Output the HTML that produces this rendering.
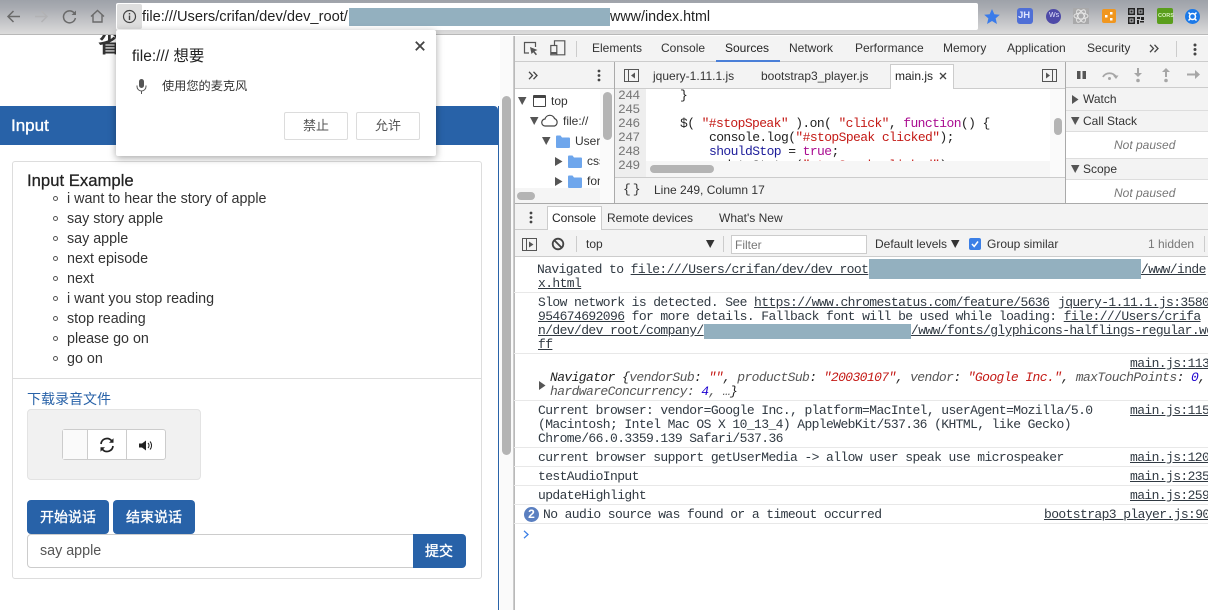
<!DOCTYPE html>
<html lang="zh"><head><meta charset="utf-8"><title>Input</title>
<style>
html,body{margin:0;padding:0}
body{width:1208px;height:610px;overflow:hidden;position:relative;background:#fff;font-family:"Liberation Sans","Noto Sans CJK SC",sans-serif;color:#222}
#w{position:absolute;left:0;top:0;width:1208px;height:610px;overflow:hidden;filter:blur(.3px)}
.b{position:absolute;box-sizing:border-box}
.t{position:absolute;white-space:nowrap}
.m{position:absolute;white-space:nowrap;font-family:"Liberation Mono",monospace;font-size:13px;letter-spacing:-.6px;line-height:14px;color:#303942}
.u{text-decoration:underline}
.d{font-size:12px;line-height:16px;color:#333}
.li{font-size:14.3px;line-height:20px;color:#333;left:67px}
.bu{position:absolute;left:53px;width:5px;height:5px;border:1px solid #555;border-radius:50%;box-sizing:border-box}
.sep{position:absolute;left:514px;right:0;height:1px;background:#e8e8e8}
.red{position:absolute;background:#93b0bf}
.wb{-webkit-text-stroke:.35px #fff}
svg{position:absolute;overflow:visible}
.src{font-size:13px;letter-spacing:-.6px;line-height:14px;color:#303942;text-decoration:underline;font-family:"Liberation Mono",monospace;position:absolute;white-space:nowrap;left:1130px}
</style></head><body><div id="w">

<!-- page -->
<div class="t" style="left:98px;top:29px;font-size:23px;line-height:30px;font-weight:bold;color:#333">省</div>
<div class="b" style="left:0;top:106px;width:499px;height:504px;border-right:1px solid #2a63a8"></div>
<div class="b" style="left:0;top:106px;width:498px;height:39px;background:#2862a8;border-top-right-radius:4px"></div>
<div class="t wb" style="left:11px;top:116px;font-size:17px;line-height:20px;color:#fff">Input</div>
<div class="b" style="left:12px;top:161px;width:470px;height:418px;border:1px solid #ddd;border-radius:3px"></div>
<div class="b" style="left:12px;top:378px;width:470px;height:1px;background:#ddd"></div>
<div class="t" style="left:27px;top:171px;font-size:16.7px;line-height:20px;color:#222;-webkit-text-stroke:.25px #222">Input Example</div>
<div class="t li" style="top:189px">i want to hear the story of apple</div><div class="bu" style="top:196px"></div>
<div class="t li" style="top:209px">say story apple</div><div class="bu" style="top:216px"></div>
<div class="t li" style="top:229px">say apple</div><div class="bu" style="top:236px"></div>
<div class="t li" style="top:249px">next episode</div><div class="bu" style="top:256px"></div>
<div class="t li" style="top:269px">next</div><div class="bu" style="top:276px"></div>
<div class="t li" style="top:289px">i want you stop reading</div><div class="bu" style="top:296px"></div>
<div class="t li" style="top:309px">stop reading</div><div class="bu" style="top:316px"></div>
<div class="t li" style="top:329px">please go on</div><div class="bu" style="top:336px"></div>
<div class="t li" style="top:349px">go on</div><div class="bu" style="top:356px"></div>
<div class="t" style="left:27px;top:389px;font-size:14px;line-height:20px;color:#2862a8">下载录音文件</div>

<div class="b" style="left:27px;top:409px;width:174px;height:71px;background:#f1f1f1;border:1px solid #e3e3e3;border-radius:4px"></div>
<div class="b" style="left:62px;top:429px;width:104px;height:31px;background:#fff;border:1px solid #ccc;border-radius:3px"></div>
<div class="b" style="left:63px;top:430px;width:25px;height:29px;background:#fafafa;border-right:1px solid #ccc"></div>
<div class="b" style="left:126px;top:430px;width:1px;height:29px;background:#ccc"></div>
<svg style="left:99px;top:437px" width="16" height="16" viewBox="0 0 16 16" fill="none" stroke="#222" stroke-width="1.700"><path d="M2 7a6 6 0 0 1 10.500-3.400L14 5"/><path d="M14 9a6 6 0 0 1-10.500 3.400L2 11"/><path d="M14.500 1.200v4.600H10" fill="#222" stroke="none"/><path d="M1.500 14.800v-4.600H6" fill="#222" stroke="none"/></svg>
<svg style="left:139px;top:440px" width="14" height="11" viewBox="0 0 14 11" fill="none"><path d="M0 3.500h3L7 .5v10l-4-3H0z" fill="#222"/><path d="M9 3a3.500 3.500 0 0 1 0 5M11 1.500a6 6 0 0 1 0 8" stroke="#222" stroke-width="1"/></svg>

<div class="b" style="left:27px;top:500px;width:82px;height:34px;background:#2862a8;border-radius:4px"></div>
<div class="t wb" style="left:40px;top:507px;font-size:14px;line-height:20px;color:#fff">开始说话</div>
<div class="b" style="left:113px;top:500px;width:82px;height:34px;background:#2862a8;border-radius:4px"></div>
<div class="t wb" style="left:126px;top:507px;font-size:14px;line-height:20px;color:#fff">结束说话</div>
<div class="b" style="left:27px;top:534px;width:387px;height:34px;border:1px solid #ccc;border-radius:4px 0 0 4px;background:#fff"></div>
<div class="t" style="left:40px;top:541px;font-size:14.300px;line-height:20px;color:#555">say apple</div>
<div class="b" style="left:413px;top:534px;width:53px;height:34px;background:#2862a8;border-radius:0 4px 4px 0"></div>
<div class="t wb" style="left:425px;top:541px;font-size:14px;line-height:20px;color:#fff">提交</div>

<!-- page scrollbar -->
<div class="b" style="left:500px;top:36px;width:14px;height:574px;background:#fafafa;border-right:1px solid #ccc"></div>
<div class="b" style="left:502px;top:96px;width:9px;height:359px;background:#b4b4b4;border-radius:5px"></div>

<!-- browser top bar -->
<div class="b" style="left:0;top:0;width:1208px;height:35px;background:linear-gradient(#9ea2a9,#a9acb2 8px,#d4d4d5 30px,#dcdcdc);border-bottom:1px solid #b8b8b8"></div>
<svg style="left:6px;top:9px" width="15" height="15" viewBox="0 0 15 15" fill="none" stroke="#6a6a6a" stroke-width="1.500"><path d="M14 7.500H2M7.500 2 2 7.500 7.500 13"/></svg>
<svg style="left:34px;top:9px" width="15" height="15" viewBox="0 0 15 15" fill="none" stroke="#b2b2b4" stroke-width="1.500"><path d="M1 7.500h12M7.500 2 13 7.500 7.500 13"/></svg>
<svg style="left:62px;top:9px" width="15" height="15" viewBox="0 0 15 15" fill="none" stroke="#6a6a6a" stroke-width="1.500"><path d="M12.800 5A6 6 0 1 0 13.400 9"/><path d="M14 1.500V6H9.500" fill="#6a6a6a" stroke="none"/></svg>
<svg style="left:90px;top:9px" width="15" height="15" viewBox="0 0 15 15" fill="none" stroke="#6a6a6a" stroke-width="1.400"><path d="M1 7.500 7.500 1.500 14 7.500M3 6v7h9V6"/></svg>
<div class="b" style="left:116px;top:3px;width:862px;height:27px;background:#fff;border-radius:2px"></div>
<div class="b" style="left:117px;top:4px;width:25px;height:25px;background:#dedede;border-radius:2px"></div>
<svg style="left:122px;top:9px" width="15" height="15" viewBox="0 0 15 15" fill="none" stroke="#444" stroke-width="1.200"><circle cx="7.500" cy="7.500" r="6"/><path d="M7.500 6.500v4.500M7.500 4v1.500" stroke-width="1.400"/></svg>
<div class="t" style="left:142px;top:7px;font-size:14.650px;line-height:20px;color:#222">file:///Users/crifan/dev/dev_root/</div>
<div class="red" style="left:349px;top:8px;width:261px;height:18px"></div>
<div class="t" style="left:610px;top:7px;font-size:14.300px;line-height:20px;color:#222">www/index.html</div>
<svg style="left:984px;top:9px" width="16" height="15" viewBox="0 0 24 23"><path d="M12 0l3.600 8 8.400.8-6.400 5.600 2 8.600L12 18.400 4.400 23l2-8.600L0 8.800 8.400 8z" fill="#3a7bea"/></svg>

<!-- extensions -->
<div class="b" style="left:1017px;top:8px;width:16px;height:16px;background:#4f6fd6;border-radius:3px"></div>
<div class="t" style="left:1018px;top:10px;font-size:9.500px;line-height:12px;font-weight:bold;color:#dfe6ff">JH</div>
<div class="b" style="left:1046px;top:9px;width:15px;height:15px;background:#4e4aa8;border-radius:50%"></div>
<div class="t" style="left:1049px;top:11px;font-size:7px;line-height:10px;color:#e4e4ff">Ws</div>
<div class="b" style="left:1073px;top:8px;width:16px;height:16px;background:#a9a9aa"></div>
<svg style="left:1073px;top:8px" width="16" height="16" viewBox="0 0 16 16" fill="none" stroke="#e8e8e8" stroke-width=".9"><ellipse cx="8" cy="8" rx="7" ry="3"/><ellipse cx="8" cy="8" rx="7" ry="3" transform="rotate(60 8 8)"/><ellipse cx="8" cy="8" rx="7" ry="3" transform="rotate(120 8 8)"/></svg>
<div class="b" style="left:1102px;top:9px;width:14px;height:14px;background:#f0961e;border-radius:2px"></div>
<svg style="left:1102px;top:9px" width="14" height="14" viewBox="0 0 14 14" fill="#fff"><rect x="3" y="6" width="2.500" height="2.500"/><rect x="8" y="3" width="2.500" height="2.500"/><rect x="8" y="9" width="2.500" height="2.500"/></svg>
<svg style="left:1128px;top:8px" width="16" height="16" viewBox="0 0 16 16" fill="#222"><path d="M0 0h7v7H0zM1.500 1.500v4h4v-4zM9 0h7v7H9zM10.500 1.500v4h4v-4zM0 9h7v7H0zM1.500 10.500v4h4v-4z" fill-rule="evenodd"/><rect x="2.500" y="2.500" width="2" height="2"/><rect x="11.500" y="2.500" width="2" height="2"/><rect x="2.500" y="11.500" width="2" height="2"/><rect x="9" y="9" width="3" height="2"/><rect x="13" y="9" width="3" height="3"/><rect x="9" y="12" width="2" height="4"/><rect x="12" y="13" width="4" height="1.500"/></svg>
<div class="b" style="left:1157px;top:8px;width:16px;height:16px;background:#5a9e1c;border-radius:2px"></div>
<div class="t" style="left:1158px;top:12px;font-size:5.500px;line-height:8px;font-weight:bold;color:#d8f0c0">CORS</div>
<div class="b" style="left:1185px;top:9px;width:15px;height:15px;background:#1b79e8;border-radius:50%"></div>
<svg style="left:1185px;top:9px" width="15" height="15" viewBox="0 0 15 15" fill="none" stroke="#fff" stroke-width="1.500"><circle cx="7.500" cy="7.500" r="3"/><path d="M3.500 3.500l2 2M11.500 3.500l-2 2M3.500 11.500l2-2M11.500 11.500l-2-2"/></svg>

<!-- devtools frame -->
<div class="b" style="left:514px;top:36px;width:694px;height:574px;background:#fff;border-left:1px solid #b9b9b9"></div>
<div class="b" style="left:515px;top:36px;width:693px;height:26px;background:#f3f3f3;border-bottom:1px solid #ccc"></div>
<svg style="left:523px;top:41px" width="16" height="15" viewBox="0 0 16 15" fill="none" stroke="#555" stroke-width="1.200"><path d="M6 12H1.500V1.500h11V6"/><path d="M7 6l7.500 3-3 1.300 2.500 3-1.200 1-2.500-3L8.500 13z" fill="#555" stroke="none"/></svg>
<svg style="left:550px;top:40px" width="16" height="16" viewBox="0 0 16 16" fill="none" stroke="#555" stroke-width="1.200"><path d="M4.500 5V.8h10.300v14H7"/><rect x=".8" y="5.500" width="6" height="9.300"/><path d="M.8 13h6" stroke-width="2"/></svg>
<div class="b" style="left:576px;top:41px;width:1px;height:16px;background:#ccc"></div>
<div class="t d" style="left:592px;top:40px">Elements</div>
<div class="t d" style="left:661px;top:40px">Console</div>
<div class="t d" style="left:725px;top:40px;color:#222">Sources</div>
<div class="b" style="left:716px;top:60px;width:64px;height:2px;background:#4a7fd8"></div>
<div class="t d" style="left:789px;top:40px">Network</div>
<div class="t d" style="left:855px;top:40px">Performance</div>
<div class="t d" style="left:943px;top:40px">Memory</div>
<div class="t d" style="left:1007px;top:40px">Application</div>
<div class="t d" style="left:1087px;top:40px">Security</div>
<svg style="left:1149px;top:44px" width="10" height="9" viewBox="0 0 10 9" fill="none" stroke="#444" stroke-width="1.300"><path d="M1 .8 4.500 4.500 1 8.200M5.500 .8 9 4.500 5.500 8.200"/></svg>
<div class="b" style="left:1176px;top:41px;width:1px;height:16px;background:#ccc"></div>
<svg style="left:1193px;top:43px" width="4" height="13" fill="#444"><circle cx="2" cy="2" r="1.500"/><circle cx="2" cy="6.500" r="1.500"/><circle cx="2" cy="11" r="1.500"/></svg>

<!-- sources: navigator -->
<div class="b" style="left:515px;top:62px;width:100px;height:27px;background:#f3f3f3;border-bottom:1px solid #ccc;border-right:1px solid #aaa"></div>
<svg style="left:528px;top:71px" width="10" height="9" viewBox="0 0 10 9" fill="none" stroke="#444" stroke-width="1.300"><path d="M1 .8 4.500 4.500 1 8.200M5.500 .8 9 4.500 5.500 8.200"/></svg>
<svg style="left:597px;top:69px" width="4" height="13" fill="#444"><circle cx="2" cy="2" r="1.400"/><circle cx="2" cy="6.500" r="1.400"/><circle cx="2" cy="11" r="1.400"/></svg>
<div class="b" style="left:614px;top:62px;width:1px;height:141px;background:#aaa"></div>
<svg style="left:518px;top:97px" width="9" height="8"><path d="M0 0h8.500L4.200 8z" fill="#555"/></svg>
<div class="b" style="left:533px;top:95px;width:13px;height:12px;border:1.500px solid #444;border-top-width:3px;border-radius:1px"></div>
<div class="t d" style="left:551px;top:93px">top</div>
<svg style="left:530px;top:117px" width="9" height="8"><path d="M0 0h8.500L4.200 8z" fill="#555"/></svg>
<svg style="left:541px;top:114px" width="18" height="13" viewBox="0 0 18 13" fill="none" stroke="#444" stroke-width="1.200"><path d="M4.500 12a3.500 3.500 0 0 1-.5-7A5 5 0 0 1 13.500 4.500 4 4 0 0 1 13.500 12z"/></svg>
<div class="t d" style="left:563px;top:113px">file://</div>
<svg style="left:542px;top:137px" width="9" height="8"><path d="M0 0h8.500L4.200 8z" fill="#555"/></svg>
<svg style="left:556px;top:135px" width="14" height="13" viewBox="0 0 14 13"><path d="M0 1.500Q0 .5 1 .5h3.500l1.500 2h7Q14 2.500 14 3.500V12q0 1-1 1H1q-1 0-1-1z" fill="#6ea6ec"/></svg>
<div class="t d" style="left:575px;top:133px;width:25px;overflow:hidden">Users</div>
<svg style="left:555px;top:157px" width="8" height="9"><path d="M0 0l7.500 4.500L0 9z" fill="#555"/></svg>
<svg style="left:568px;top:155px" width="14" height="13" viewBox="0 0 14 13"><path d="M0 1.500Q0 .5 1 .5h3.500l1.500 2h7Q14 2.500 14 3.500V12q0 1-1 1H1q-1 0-1-1z" fill="#6ea6ec"/></svg>
<div class="t d" style="left:587px;top:153px;width:13px;overflow:hidden">css</div>
<svg style="left:555px;top:177px" width="8" height="9"><path d="M0 0l7.500 4.500L0 9z" fill="#555"/></svg>
<svg style="left:568px;top:175px" width="14" height="13" viewBox="0 0 14 13"><path d="M0 1.500Q0 .5 1 .5h3.500l1.500 2h7Q14 2.500 14 3.500V12q0 1-1 1H1q-1 0-1-1z" fill="#6ea6ec"/></svg>
<div class="t d" style="left:587px;top:173px;width:13px;overflow:hidden">fonts</div>
<div class="b" style="left:600px;top:89px;width:14px;height:114px;background:#fafafa"></div>
<div class="b" style="left:603px;top:92px;width:9px;height:48px;background:#b4b4b4;border-radius:5px"></div>
<div class="b" style="left:515px;top:188px;width:85px;height:15px;background:#f5f5f5"></div>
<div class="b" style="left:517px;top:192px;width:18px;height:8px;background:#b4b4b4;border-radius:4px"></div>

<!-- sources: tabs -->
<div class="b" style="left:615px;top:62px;width:451px;height:27px;background:#f3f3f3;border-bottom:1px solid #ccc"></div>
<svg style="left:624px;top:69px" width="15" height="13" viewBox="0 0 15 13" fill="none" stroke="#555"><rect x=".5" y=".5" width="14" height="12"/><path d="M4.500 .5v12"/><path d="M11 3.500v6L7 6.500z" fill="#555" stroke="none"/></svg>
<div class="t d" style="left:653px;top:68px">jquery-1.11.1.js</div>
<div class="t d" style="left:761px;top:68px">bootstrap3_player.js</div>
<div class="b" style="left:890px;top:64px;width:64px;height:25px;background:#fff;border:1px solid #ccc;border-bottom:none"></div>
<div class="t d" style="left:895px;top:68px;color:#222">main.js</div>
<svg style="left:939px;top:72px" width="8" height="8" fill="none" stroke="#444" stroke-width="1.300"><path d="M1 1l6 6M7 1 1 7"/></svg>
<svg style="left:1042px;top:69px" width="15" height="13" viewBox="0 0 15 13" fill="none" stroke="#555"><rect x=".5" y=".5" width="14" height="12"/><path d="M10.500 .5v12"/><path d="M4 3.500v6l4-3z" fill="#555" stroke="none"/></svg>

<!-- code -->
<div class="b" style="left:615px;top:89px;width:31px;height:88px;background:#eee"></div>
<div style="position:absolute;left:615px;top:89px;width:451px;height:88px;overflow:hidden">
<div class="m" style="left:3px;top:0;color:#777">244</div>
<div class="m" style="left:3px;top:14px;color:#777">245</div>
<div class="m" style="left:3px;top:28px;color:#777">246</div>
<div class="m" style="left:3px;top:42px;color:#777">247</div>
<div class="m" style="left:3px;top:56px;color:#777">248</div>
<div class="m" style="left:3px;top:70px;color:#777">249</div>
<div class="m" style="left:65px;top:0;color:#222">}</div>
<div class="m" style="left:65px;top:28px;color:#222">$( <span style="color:#c41a16">"#stopSpeak"</span> ).on( <span style="color:#c41a16">"click"</span>, <span style="color:#aa0d91">function</span>() {</div>
<div class="m" style="left:94px;top:42px;color:#222">console.log(<span style="color:#c41a16">"#stopSpeak clicked"</span>);</div>
<div class="m" style="left:94px;top:56px;color:#1c1c9a">shouldStop <span style="color:#222">=</span> <span style="color:#aa0d91">true</span><span style="color:#222">;</span></div>
<div class="m" style="left:94px;top:70px;color:#222">updateStatus(<span style="color:#c41a16">"stopSpeak clicked"</span>);</div>
</div>
<div class="b" style="left:646px;top:161px;width:404px;height:16px;background:#f6f6f6"></div>
<div class="b" style="left:650px;top:165px;width:64px;height:8px;background:#b4b4b4;border-radius:4px"></div>
<div class="b" style="left:1050px;top:89px;width:15px;height:88px;background:#fafafa"></div>
<div class="b" style="left:1054px;top:118px;width:8px;height:17px;background:#b4b4b4;border-radius:4px"></div>
<div class="b" style="left:615px;top:177px;width:451px;height:26px;background:#f3f3f3;border-top:1px solid #ccc"></div>
<div class="t" style="left:623px;top:182px;font-family:'Liberation Mono',monospace;font-size:13px;letter-spacing:2px;line-height:16px;color:#333">{}</div>
<div class="t d" style="left:654px;top:182px">Line 249, Column 17</div>

<!-- debugger side -->
<div class="b" style="left:1065px;top:62px;width:1px;height:141px;background:#aaa"></div>
<div class="b" style="left:1066px;top:62px;width:142px;height:26px;background:#f3f3f3;border-bottom:1px solid #ccc"></div>
<svg style="left:1077px;top:70px" width="10" height="10" fill="#555"><rect x="0" y="1" width="3.500" height="8"/><rect x="5.500" y="1" width="3.500" height="8"/></svg>
<svg style="left:1102px;top:69px" width="17" height="12" viewBox="0 0 17 12" fill="none" stroke="#a6a6a6" stroke-width="1.800"><path d="M1 8a7 6 0 0 1 13 0"/><path d="M11 6.500h5.500l-2.500 3.500z" fill="#a6a6a6" stroke="none"/><circle cx="7.500" cy="9.500" r="1.500" fill="#a6a6a6" stroke="none"/></svg>
<svg style="left:1134px;top:68px" width="8" height="15" viewBox="0 0 8 15" fill="#a6a6a6"><path d="M3 0h2v5h3L4 9 0 5h3z"/><circle cx="4" cy="12.500" r="1.800"/></svg>
<svg style="left:1162px;top:68px" width="8" height="15" viewBox="0 0 8 15" fill="#a6a6a6"><path d="M3 9h2V4h3L4 0 0 4h3z"/><circle cx="4" cy="12.500" r="1.800"/></svg>
<svg style="left:1187px;top:69px" width="14" height="11" viewBox="0 0 14 11" fill="#a6a6a6"><path d="M0 4.500h8V1l5 4.500L8 10V6.500H0z"/></svg>
<div class="b" style="left:1066px;top:88px;width:142px;height:23px;background:#f3f3f3;border-bottom:1px solid #ddd"></div>
<svg style="left:1072px;top:95px" width="7" height="9"><path d="M0 0l6.500 4.500L0 9z" fill="#555"/></svg>
<div class="t d" style="left:1083px;top:91px">Watch</div>
<div class="b" style="left:1066px;top:111px;width:142px;height:21px;background:#f3f3f3;border-bottom:1px solid #ddd"></div>
<svg style="left:1071px;top:117px" width="9" height="8"><path d="M0 0h8.500L4.200 8z" fill="#555"/></svg>
<div class="t d" style="left:1083px;top:113px">Call Stack</div>
<div class="t" style="left:1114px;top:137px;font-size:12px;line-height:16px;font-style:italic;color:#777">Not paused</div>
<div class="b" style="left:1066px;top:158px;width:142px;height:22px;background:#f3f3f3;border-top:1px solid #ddd;border-bottom:1px solid #ddd"></div>
<svg style="left:1071px;top:165px" width="9" height="8"><path d="M0 0h8.500L4.200 8z" fill="#555"/></svg>
<div class="t d" style="left:1083px;top:161px">Scope</div>
<div class="t" style="left:1114px;top:185px;font-size:12px;line-height:16px;font-style:italic;color:#777">Not paused</div>

<!-- drawer -->
<div class="b" style="left:515px;top:203px;width:693px;height:27px;background:#f3f3f3;border-top:1px solid #aaa;border-bottom:1px solid #ccc"></div>
<svg style="left:529px;top:211px" width="4" height="13" fill="#444"><circle cx="2" cy="2" r="1.400"/><circle cx="2" cy="6.500" r="1.400"/><circle cx="2" cy="11" r="1.400"/></svg>
<div class="b" style="left:547px;top:206px;width:55px;height:24px;background:#fff;border:1px solid #ccc;border-bottom:none"></div>
<div class="t d" style="left:552px;top:210px;color:#222">Console</div>
<div class="t d" style="left:607px;top:210px">Remote devices</div>
<div class="t d" style="left:719px;top:210px">What's New</div>

<div class="b" style="left:515px;top:230px;width:693px;height:27px;background:#f3f3f3;border-bottom:1px solid #ccc"></div>
<svg style="left:522px;top:238px" width="15" height="13" viewBox="0 0 15 13" fill="none" stroke="#555"><rect x=".5" y=".5" width="14" height="12"/><path d="M4.500 .5v12"/><path d="M7 3.500v6l4.500-3z" fill="#555" stroke="none"/></svg>
<svg style="left:551px;top:237px" width="14" height="14" viewBox="0 0 14 14" fill="none" stroke="#444" stroke-width="1.800"><circle cx="7" cy="7" r="5.300"/><path d="M3.300 3.300l7.400 7.400"/></svg>
<div class="b" style="left:576px;top:236px;width:1px;height:16px;background:#ccc"></div>
<div class="t d" style="left:586px;top:236px">top</div>
<svg style="left:706px;top:240px" width="9" height="8"><path d="M0 0h8.500L4.200 8z" fill="#333"/></svg>
<div class="b" style="left:723px;top:236px;width:1px;height:16px;background:#ccc"></div>
<div class="b" style="left:731px;top:235px;width:136px;height:19px;background:#fff;border:1px solid #ccc"></div>
<div class="t" style="left:735px;top:237px;font-size:12px;line-height:16px;color:#777">Filter</div>
<div class="t d" style="left:875px;top:236px">Default levels</div>
<svg style="left:951px;top:240px" width="9" height="8"><path d="M0 0h8.500L4.200 8z" fill="#333"/></svg>
<div class="b" style="left:969px;top:238px;width:12px;height:12px;background:#3b7fe6;border-radius:2px"></div>
<svg style="left:969px;top:238px" width="12" height="12" fill="none" stroke="#fff" stroke-width="1.500"><path d="M3 6l2.200 2.500L9 3.500"/></svg>
<div class="t d" style="left:987px;top:236px">Group similar</div>
<div class="t" style="left:1148px;top:236px;font-size:12px;line-height:16px;color:#777">1 hidden</div>
<div class="b" style="left:1204px;top:236px;width:1px;height:16px;background:#ccc"></div>

<!-- console messages -->
<div class="m" style="left:537px;top:263px">Navigated to <span class="u">file:///Users/crifan/dev/dev_root</span></div>
<div class="red" style="left:869px;top:259px;width:272px;height:20px"></div>
<div class="m u" style="left:1141px;top:263px">/www/inde</div>
<div class="m u" style="left:538px;top:277px">x.html</div>
<div class="sep" style="top:292px"></div>
<div class="m" style="left:538px;top:296px">Slow network is detected. See <span class="u">https://www.chromestatus.com/feature/5636</span></div>
<div class="m u" style="left:1058px;top:296px">jquery-1.11.1.js:3580</div>
<div class="m" style="left:538px;top:310px"><span class="u">954674692096</span> for more details. Fallback font will be used while loading: <span class="u">file:///Users/crifa</span></div>
<div class="m u" style="left:538px;top:324px">n/dev/dev_root/company/</div>
<div class="red" style="left:704px;top:324px;width:207px;height:15px"></div>
<div class="m u" style="left:911px;top:324px">/www/fonts/glyphicons-halflings-regular.wo</div>
<div class="m u" style="left:538px;top:338px">ff</div>
<div class="sep" style="top:353px"></div>
<div class="src" style="top:357px">main.js:113</div>
<svg style="left:539px;top:381px" width="7" height="9"><path d="M0 0l6.500 4.500L0 9z" fill="#555"/></svg>
<div class="m" style="left:550px;top:371px;font-style:italic;color:#222">Navigator {<span style="color:#565656">vendorSub</span>: <span style="color:#c41a16">""</span>, <span style="color:#565656">productSub</span>: <span style="color:#c41a16">"20030107"</span>, <span style="color:#565656">vendor</span>: <span style="color:#c41a16">"Google Inc."</span>, <span style="color:#565656">maxTouchPoints</span>: <span style="color:#1c00cf">0</span>,</div>
<div class="m" style="left:550px;top:385px;font-style:italic;color:#565656">hardwareConcurrency: <span style="color:#1c00cf">4</span>, …<span style="color:#222">}</span></div>
<div class="sep" style="top:400px"></div>
<div class="m" style="left:538px;top:404px">Current browser: vendor=Google Inc., platform=MacIntel, userAgent=Mozilla/5.0</div>
<div class="src" style="top:404px">main.js:115</div>
<div class="m" style="left:538px;top:418px">(Macintosh; Intel Mac OS X 10_13_4) AppleWebKit/537.36 (KHTML, like Gecko)</div>
<div class="m" style="left:538px;top:432px">Chrome/66.0.3359.139 Safari/537.36</div>
<div class="sep" style="top:447px"></div>
<div class="m" style="left:538px;top:451px">current browser support getUserMedia -&gt; allow user speak use microspeaker</div>
<div class="src" style="top:451px">main.js:120</div>
<div class="sep" style="top:466px"></div>
<div class="m" style="left:538px;top:470px">testAudioInput</div>
<div class="src" style="top:470px">main.js:235</div>
<div class="sep" style="top:485px"></div>
<div class="m" style="left:538px;top:489px">updateHighlight</div>
<div class="src" style="top:489px">main.js:259</div>
<div class="sep" style="top:504px"></div>
<div class="b" style="left:524px;top:507px;width:15px;height:15px;border-radius:50%;background:#5a7fc0"></div>
<div class="t" style="left:524px;top:507px;width:15px;text-align:center;font-size:12px;line-height:15px;font-weight:bold;color:#fff">2</div>
<div class="m" style="left:543px;top:508px">No audio source was found or a timeout occurred</div>
<div class="m u" style="left:1044px;top:508px">bootstrap3_player.js:90</div>
<div class="sep" style="top:523px"></div>
<svg style="left:523px;top:530px" width="7" height="9" fill="none" stroke="#3b7fe6" stroke-width="1.300"><path d="M1 .8 5 4.500 1 8.200"/></svg>

<!-- permission popup -->
<div class="b" style="left:116px;top:30px;width:320px;height:126px;background:#fff;border-radius:2px;box-shadow:0 2px 8px rgba(0,0,0,.35)"></div>
<div class="t" style="left:132px;top:47px;font-size:15.500px;line-height:20px;color:#222">file:/// 想要</div>
<svg style="left:415px;top:41px" width="10" height="10" fill="none" stroke="#444" stroke-width="1.800"><path d="M.8.800l8.400 8.400M9.200.800.800 9.200"/></svg>
<svg style="left:136px;top:79px" width="11" height="15" viewBox="0 0 11 15" fill="#555"><rect x="3" y="0" width="5" height="9" rx="2.500"/><path d="M1 6.500v1a4.500 4.500 0 0 0 9 0v-1" fill="none" stroke="#555" stroke-width="1"/><rect x="5" y="12" width="1" height="3"/></svg>
<div class="t" style="left:162px;top:77px;font-size:12.200px;line-height:18px;color:#333">使用您的麦克风</div>
<div class="b" style="left:284px;top:112px;width:64px;height:28px;background:#fff;border:1px solid #dcdcdc;border-radius:2px"></div>
<div class="t" style="left:284px;top:117px;width:64px;text-align:center;font-size:13px;line-height:18px;color:#555">禁止</div>
<div class="b" style="left:356px;top:112px;width:64px;height:28px;background:#fff;border:1px solid #dcdcdc;border-radius:2px"></div>
<div class="t" style="left:356px;top:117px;width:64px;text-align:center;font-size:13px;line-height:18px;color:#555">允许</div>

</div></body></html>
